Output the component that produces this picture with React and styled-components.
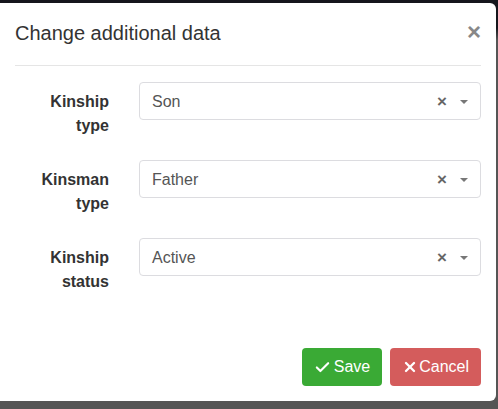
import styled, { createGlobalStyle } from "styled-components";
import { Check, X } from "lucide-react";

const GlobalStyle = createGlobalStyle`
  html, body {
    margin: 0;
    padding: 0;
  }
  body {
    height: 409px;
    background-color: #555555;
    background-image: linear-gradient(to bottom, #15161c 0, #15161c 28px, #555555 40px);
    background-size: 100% 40px;
    background-repeat: no-repeat;
    font-family: "Liberation Sans", Arial, sans-serif;
    overflow: hidden;
  }
  #root {
    padding-top: 3px;
  }
`;

const Modal = styled.div`
  width: 496px;
  height: 398px;
  box-sizing: border-box;
  background: #fff;
  border-radius: 0 6px 6px 0;
  display: flex;
  flex-direction: column;
`;

const Header = styled.div`
  margin: 0 15px;
  height: 62px;
  border-bottom: 1px solid #e5e5e5;
  display: flex;
  align-items: center;
  justify-content: space-between;
`;

const Title = styled.h4`
  margin: 0;
  font-size: 20px;
  font-weight: 400;
  color: #333;
  padding-bottom: 1px;
`;

const Close = styled.button`
  border: 0;
  background: none;
  padding: 0;
  margin-top: -5px;
  font-family: "Liberation Sans", Arial, sans-serif;
  font-size: 24px;
  font-weight: 700;
  line-height: 1;
  color: #888;
  cursor: pointer;
`;

const Body = styled.div`
  padding: 16px 15px 40px;
  display: flex;
  flex-direction: column;
  gap: 23px;
`;

const Row = styled.div`
  display: grid;
  grid-template-columns: 94px 342px;
  column-gap: 30px;
  height: 55px;
`;

const Label = styled.label`
  padding-top: 8px;
  text-align: right;
  font-size: 16px;
  font-weight: 700;
  line-height: 24px;
  color: #333;
`;

const Select = styled.div`
  height: 38px;
  box-sizing: border-box;
  border: 1px solid #dcdce0;
  border-radius: 4px;
  padding: 1px 12px 0;
  display: flex;
  align-items: center;
  font-size: 16px;
  color: #555;
`;

const Value = styled.span`
  flex: 1;
`;

const Clear = styled.span`
  font-size: 17px;
  font-weight: 700;
  color: #666;
  margin-right: 13px;
  line-height: 1;
`;

const Caret = styled.span`
  width: 0;
  height: 0;
  border-left: 4px solid transparent;
  border-right: 4px solid transparent;
  border-top: 4px solid #777;
`;

const Footer = styled.div`
  margin-top: auto;
  padding: 15px;
  display: flex;
  justify-content: flex-end;
  gap: 8px;
`;

const Button = styled.button`
  height: 38px;
  padding: 0 12px;
  border: 0;
  border-radius: 4px;
  background: ${({ $variant }) => ($variant === "danger" ? "#d45c5c" : "#3aaa35")};
  color: #fff;
  font-family: "Liberation Sans", Arial, sans-serif;
  font-size: 16px;
  display: flex;
  align-items: center;
  gap: ${({ $variant }) => ($variant === "danger" ? "1px" : "3px")};
  cursor: pointer;
`;

const fields = [
  { id: 1, label: ["Kinship", "type"], value: "Son" },
  { id: 2, label: ["Kinsman", "type"], value: "Father" },
  { id: 3, label: ["Kinship", "status"], value: "Active" },
];

const App = () => {
  return (
    <>
      <GlobalStyle />
      <Modal>
        <Header>
          <Title>Change additional data</Title>
          <Close>×</Close>
        </Header>

        <Body>
          {fields.map((item) => (
            <Row key={item.id}>
              <Label>
                {item.label[0]}
                <br />
                {item.label[1]}
              </Label>
              <Select>
                <Value>{item.value}</Value>
                <Clear>×</Clear>
                <Caret />
              </Select>
            </Row>
          ))}
        </Body>

        <Footer>
          <Button>
            <Check size={17} strokeWidth={3} />
            Save
          </Button>
          <Button $variant="danger">
            <X size={16} strokeWidth={3.5} />
            Cancel
          </Button>
        </Footer>
      </Modal>
    </>
  );
};

export default App;
